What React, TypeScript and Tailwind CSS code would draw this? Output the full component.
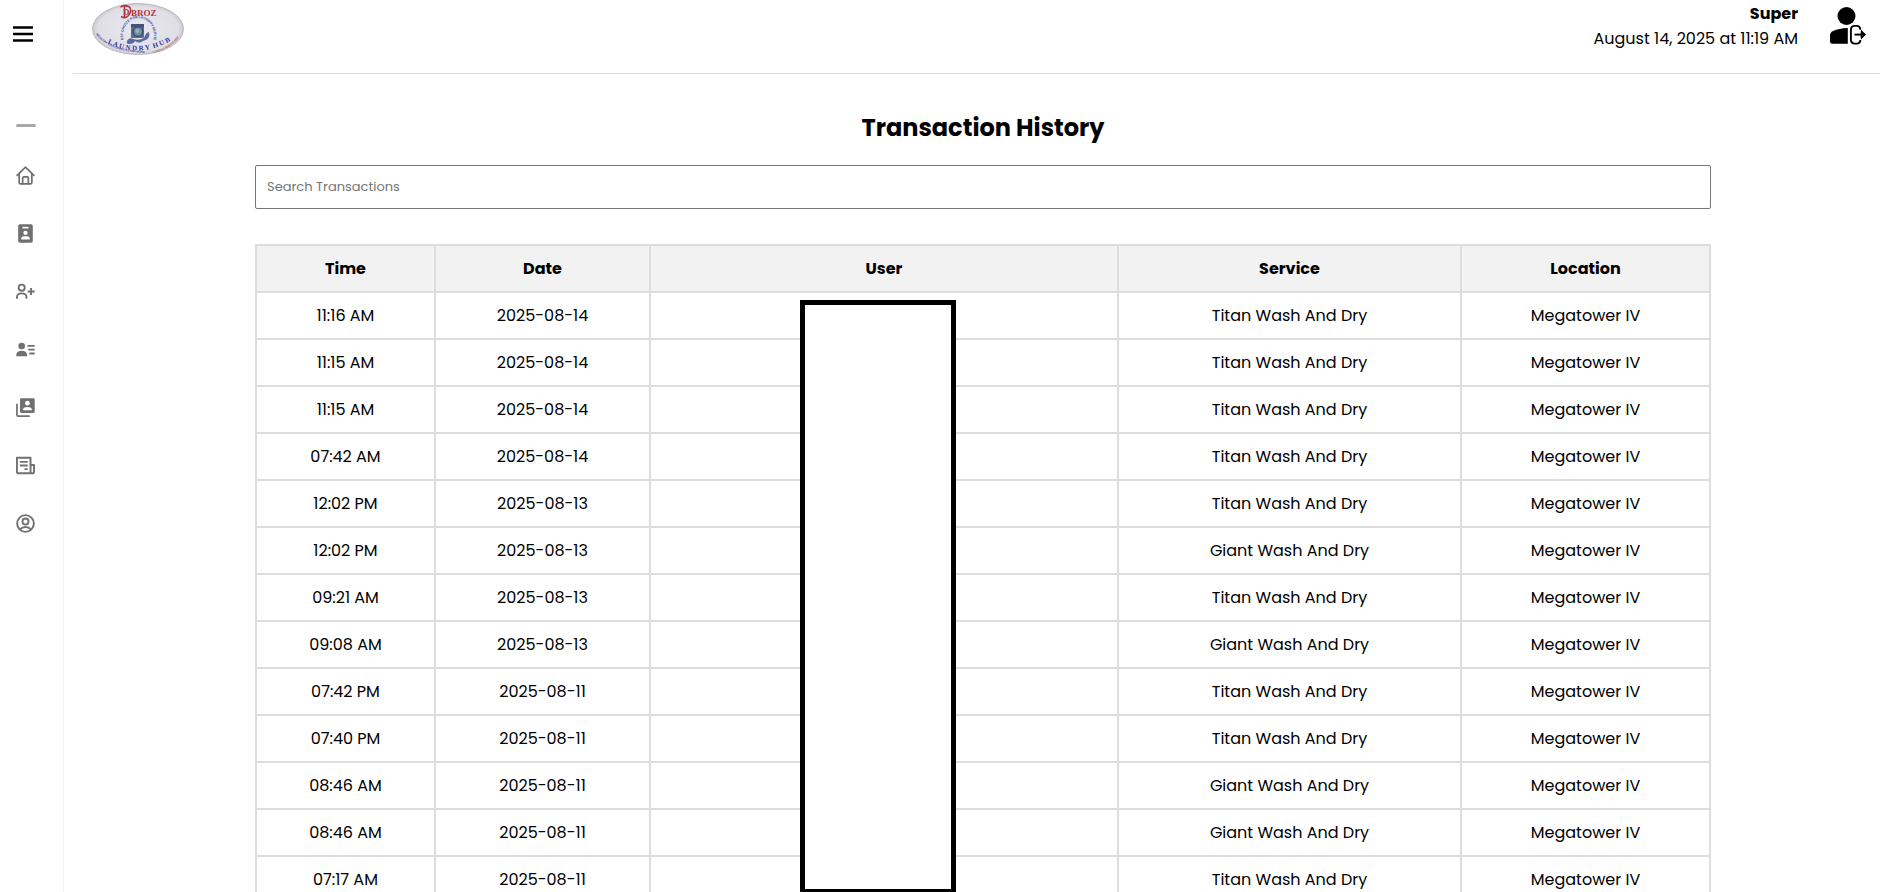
import React from "react";

const ink = { fill: "none", stroke: "currentColor", strokeWidth: 2, strokeLinecap: "round", strokeLinejoin: "round" } as const;

const navItems = [
  {
    label: "Home",
    icon: (
      <g {...ink} strokeWidth={1.8}>
        <path d="M1.200 9.800 L10 1.200 L18.800 9.800" />
        <path d="M3.300 8.300 V17.300 Q3.300 18.800 4.800 18.800 H15.200 Q16.700 18.800 16.700 17.300 V8.300" />
        <path d="M7 18.500 V12.800 Q7 11.500 8.300 11.500 H11.700 Q13 11.500 13 12.800 V18.500" />
      </g>
    ),
  },
  {
    label: "Staff badges",
    icon: (
      <g>
        <rect x="2.300" y="0.300" width="15.400" height="19.400" rx="1.800" fill="currentColor" />
        <rect x="6.800" y="3" width="6.400" height="1.700" fill="#fff" />
        <circle cx="10" cy="9.300" r="2.300" fill="#fff" />
        <path d="M5.500 16.300 V15.500 Q5.500 12.800 8.200 12.800 H11.800 Q14.500 12.800 14.500 15.500 V16.300Z" fill="#fff" />
      </g>
    ),
  },
  {
    label: "Add user",
    icon: (
      <g {...ink} strokeLinecap="butt">
        <circle cx="6" cy="6" r="3.200" />
        <path d="M1 17.500 V16 Q1 12 6 12 Q11 12 11 16 V17.500" />
        <path d="M12.300 10 H19.700 M15.900 6.400 V13.700" />
      </g>
    ),
  },
  {
    label: "User list",
    icon: (
      <g>
        <circle cx="6" cy="6.300" r="3.500" fill="currentColor" />
        <path d="M0.300 17 V15.500 Q0.800 11.300 6 11.300 Q11.200 11.300 11.700 15.500 V17Z" fill="currentColor" />
        <path d="M12 6.200 H19.700 M13 10.200 H19.700 M14 14.200 H19.700" stroke="currentColor" strokeWidth="1.900" />
      </g>
    ),
  },
  {
    label: "Contacts",
    icon: (
      <g>
        <rect x="4.200" y="0.300" width="15.500" height="15.500" rx="1.500" fill="currentColor" />
        <circle cx="12" cy="5.500" r="2.500" fill="#fff" />
        <path d="M7.200 12.800 V12 Q8.200 9.500 12 9.500 Q15.800 9.500 16.800 12 V12.800Z" fill="#fff" />
        <path d="M1 6 V17.800 Q1 19 2.200 19 H14.500" fill="none" stroke="currentColor" strokeWidth="1.800" />
      </g>
    ),
  },
  {
    label: "Transactions",
    icon: (
      <g fill="none" stroke="currentColor" strokeWidth="2" strokeLinejoin="round">
        <path d="M15.300 18.200 H3 Q1 18.200 1 16.200 V1.800 H15.300 V18.200 H17 Q19 18.200 19 16.200 V9.500 H15.300" />
        <path d="M4 6.200 H12.300 M4 10 H12.300 M9 13.800 H12.300" />
      </g>
    ),
  },
  {
    label: "Profile",
    icon: (
      <g fill="none" stroke="currentColor" strokeWidth="2">
        <circle cx="10" cy="10" r="8.800" />
        <circle cx="10" cy="8" r="3.200" />
        <path d="M4 16.500 Q6.500 13.700 10 13.700 Q13.500 13.700 16 16.500" />
      </g>
    ),
  },
];

const TITAN = "Titan Wash And Dry";
const GIANT = "Giant Wash And Dry";

const transactions = [
  ["11:16 AM", "2025-08-14", TITAN],
  ["11:15 AM", "2025-08-14", TITAN],
  ["11:15 AM", "2025-08-14", TITAN],
  ["07:42 AM", "2025-08-14", TITAN],
  ["12:02 PM", "2025-08-13", TITAN],
  ["12:02 PM", "2025-08-13", GIANT],
  ["09:21 AM", "2025-08-13", TITAN],
  ["09:08 AM", "2025-08-13", GIANT],
  ["07:42 PM", "2025-08-11", TITAN],
  ["07:40 PM", "2025-08-11", TITAN],
  ["08:46 AM", "2025-08-11", GIANT],
  ["08:46 AM", "2025-08-11", GIANT],
  ["07:17 AM", "2025-08-11", TITAN],
];

function Logo() {
  return (
    <svg viewBox="0 0 92 52" className="h-[52px] w-[92px]" role="img" aria-label="DBroz Laundry Hub">
      <defs>
        <radialGradient id="plate" cx="50%" cy="50%" r="55%">
          <stop offset="0" stopColor="#e8e7f0" />
          <stop offset="0.8" stopColor="#e0dfe6" />
          <stop offset="1" stopColor="#b9b8bd" />
        </radialGradient>
        <path id="arcTop" d="M31.500 37 A15.500 17.500 0 1 1 61.500 37" />
        <path id="arcHub" d="M12 38 Q46 58 82 36" />
        <path id="arcLeft" d="M4 31 Q16 49 54 50" />
        <path id="arcRight" d="M61 50 Q80 46 89 31" />
      </defs>
      <ellipse cx="46" cy="26" rx="45.500" ry="25.500" fill="url(#plate)" stroke="#b0afb2" strokeWidth="0.800" />
      <g fill="#b3343c" fontFamily="Liberation Serif, serif" fontWeight="700">
        <text x="31" y="12" fontSize="9">D</text>
        <text x="39" y="13" fontSize="9">BROZ</text>
      </g>
      <path d="M28.500 4 Q34 1 38 4.500 Q40 9 36 13 Q33 16 29 13.500 M32.500 3 V14" fill="none" stroke="#b3343c" strokeWidth="1.500" />
      <text fontSize="3.400" fontWeight="700" fontFamily="Liberation Sans, sans-serif" fill="#3940a0" textAnchor="middle">
        <textPath href="#arcTop" startOffset="50%">BEST CHOICE FOR LAUNDRY SERVICE</textPath>
      </text>
      <rect x="39" y="21" width="13" height="14" rx="1" fill="#5b6d8f" />
      <rect x="39" y="21" width="13" height="3" fill="#44527c" />
      <circle cx="46" cy="28.500" r="5.500" fill="#3d4f7c" />
      <circle cx="46" cy="28.500" r="4" fill="#6f929c" />
      <circle cx="45.500" cy="28" r="2" fill="#94b3b5" />
      <path d="M35 38 Q37 34 41 36 Q47 38 52 35 Q54 29 57 29 Q59 36 51 38 Q47 41 43 38 Q42 41 37 41 Q34 41 35 38Z" fill="#5b69a0" />
      <text fontSize="7" fontWeight="700" fontFamily="Liberation Serif, serif" fill="#2f3698" textAnchor="middle">
        <textPath href="#arcHub" startOffset="50%">{"L A U N D R Y \u00a0H U B"}</textPath>
      </text>
      <text fontSize="2.800" fontWeight="700" fontFamily="Liberation Sans, sans-serif" fill="#3b3f95">
        <textPath href="#arcLeft">WASH DRY FOLD SERVICES AND MORE</textPath>
      </text>
      <text fontSize="2.600" fontWeight="700" fontFamily="Liberation Sans, sans-serif" fill="#b3545c">
        <textPath href="#arcRight">CONTACT 0999 000 0000</textPath>
      </text>
    </svg>
  );
}

function LogoutIcon() {
  return (
    <svg viewBox="0 0 36 38" className="h-[38px] w-[36px]" aria-hidden="true">
      <circle cx="16.500" cy="9" r="9" fill="#000" />
      <path d="M17.800 21 V36.800 H2.500 Q0 36.800 0 34.500 V28.500 Q0 25.500 3 24 Q9 21.300 17.800 21Z" fill="#000" />
      <path
        d="M30.300 22.800 Q30.300 18.900 26.500 18.900 H25 Q20.900 18.900 20.900 23 V32.500 Q20.900 36.600 25 36.600 H26.500 Q30.300 36.600 30.300 33"
        fill="none"
        stroke="#000"
        strokeWidth="1.900"
      />
      <path d="M24.500 27.600 H34" stroke="#000" strokeWidth="1.900" />
      <path d="M31 22.800 L36 27.600 L31 32.400 L30.600 29 V26.200Z" fill="#000" />
    </svg>
  );
}

export default function App() {
  return (
    <div className="flex min-h-screen overflow-x-hidden bg-white font-[Poppins,Inter,sans-serif] text-base text-black">
      <aside className="w-16 shrink-0 border-r border-[#f3f3f3] pl-3">
        <button type="button" aria-label="Toggle menu" className="mt-5 block h-7 w-6">
          <svg viewBox="0 0 24 28" className="h-7 w-6" aria-hidden="true">
            <path d="M1 7.500H21M1 14H21M1 20.500H21" stroke="#000" strokeWidth="2.400" />
          </svg>
        </button>
        <hr className="mt-19 ml-1 h-[3px] w-5 rounded-sm border-0 bg-[#a9a9a9]" />
        <nav className="mt-[38px] ml-1 flex flex-col gap-[38px]">
          {navItems.map(({ label, icon }) => (
            <a key={label} href="#" aria-label={label} className="flex h-5 w-[19px] items-center text-[#707070]">
              <svg viewBox="0 0 20 20" className="size-[19px]" aria-hidden="true">
                {icon}
              </svg>
            </a>
          ))}
        </nav>
      </aside>

      <div className="min-w-0 flex-1 pl-[9px]">
        <header className="flex h-[74px] items-start justify-between border-b border-[#dddddd] pr-[14px] pl-[19px]">
          <div className="pt-[3px]">
            <Logo />
          </div>
          <div className="flex items-start gap-8">
            <div className="pt-[1px] text-right leading-[25px]">
              <p className="font-bold">Super</p>
              <p>August 14, 2025 at 11:19 AM</p>
            </div>
            <button type="button" aria-label="Log out" className="mt-[7px]">
              <LogoutIcon />
            </button>
          </div>
        </header>

        <main className="-mr-[13px]">
          <div className="mx-auto w-4/5 pt-[34px]">
            <h1 className="text-center text-2xl leading-10 font-bold">Transaction History</h1>
            <input
              type="search"
              aria-label="Search Transactions"
              placeholder="Search Transactions"
              className="mt-[17px] block h-11 w-full rounded-xs border border-[#767676] px-[11px] text-[13px] placeholder:text-[#757575]"
            />
            <div className="relative mt-[35px]">
              <table className="w-full table-fixed border-collapse text-center leading-[25px]">
                <colgroup>
                  <col className="w-[179px]" />
                  <col className="w-[215px]" />
                  <col />
                  <col className="w-[343px]" />
                  <col className="w-[249px]" />
                </colgroup>
                <thead>
                  <tr className="bg-[#f2f2f2]">
                    {["Time", "Date", "User", "Service", "Location"].map((name) => (
                      <th key={name} scope="col" className="border-2 border-[#dddddd] py-[10px] font-bold">
                        {name}
                      </th>
                    ))}
                  </tr>
                </thead>
                <tbody>
                  {transactions.map(([time, date, service], i) => (
                    <tr key={i}>
                      <td className="border-2 border-[#dddddd] py-[10px]">{time}</td>
                      <td className="border-2 border-[#dddddd] py-[10px]">{date}</td>
                      <td className="border-2 border-[#dddddd] py-[10px]"></td>
                      <td className="border-2 border-[#dddddd] py-[10px]">{service}</td>
                      <td className="border-2 border-[#dddddd] py-[10px]">Megatower IV</td>
                    </tr>
                  ))}
                </tbody>
              </table>
              <div className="absolute top-14 left-[545px] h-[594px] w-[156px] border-5 border-black bg-white" />
            </div>
          </div>
        </main>
      </div>
    </div>
  );
}
